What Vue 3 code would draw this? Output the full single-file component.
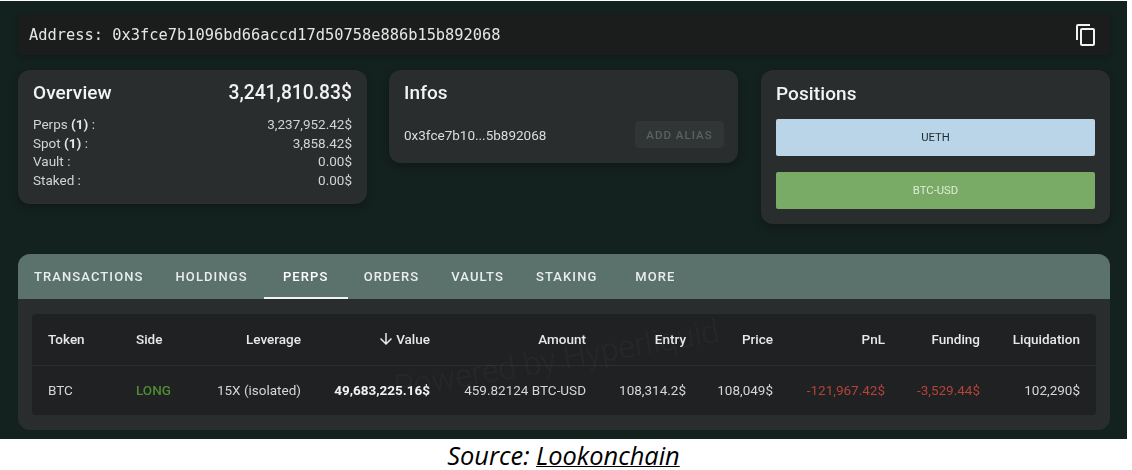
<template>
  <div class="page">
    <div class="screen">
      <div class="address-bar">
        <span class="address-text">Address: {{ address }}</span>
        <svg class="copy-icon" viewBox="0 0 24 24" width="24" height="24" aria-hidden="true">
          <path d="M16 1H4c-1.1 0-2 .9-2 2v14h2V3h12V1zm3 4H8c-1.1 0-2 .9-2 2v14c0 1.100.9 2 2 2h11c1.100 0 2-.9 2-2V7c0-1.100-.9-2-2-2zm0 16H8V7h11v14z" />
        </svg>
      </div>

      <div class="cards">
        <section class="card overview">
          <div class="overview-head">
            <h2>Overview</h2>
            <span class="total">3,241,810.83$</span>
          </div>
          <div v-for="line in overview" :key="line.label" class="overview-line">
            <span>{{ line.label }} <b v-if="line.count">(1)</b> :</span>
            <span>{{ line.value }}</span>
          </div>
        </section>

        <section class="card infos">
          <h2>Infos</h2>
          <div class="infos-row">
            <span>0x3fce7b10...5b892068</span>
            <button class="alias-btn">ADD ALIAS</button>
          </div>
        </section>

        <section class="card positions">
          <h2>Positions</h2>
          <div class="position ueth">UETH</div>
          <div class="position btc">BTC-USD</div>
        </section>
      </div>

      <section class="panel">
        <nav class="tabs">
          <a v-for="tab in tabs" :key="tab" class="tab" :class="{ active: tab === 'PERPS' }">{{ tab }}</a>
        </nav>
        <div class="table-wrap">
          <div class="table">
            <div class="row head">
              <span class="left">Token</span>
              <span class="left">Side</span>
              <span>Leverage</span>
              <span class="value-head">
                <svg viewBox="0 0 24 24" width="18" height="18" aria-hidden="true">
                  <path d="M20 12l-1.410-1.410L13 16.170V4h-2v12.170l-5.580-5.590L4 12l8 8 8-8z" />
                </svg>
                Value
              </span>
              <span>Amount</span>
              <span>Entry</span>
              <span>Price</span>
              <span>PnL</span>
              <span>Funding</span>
              <span>Liquidation</span>
            </div>
            <div class="row body">
              <span class="left">BTC</span>
              <span class="left long">LONG</span>
              <span>15X (isolated)</span>
              <span class="strong">49,683,225.16$</span>
              <span>459.82124 BTC-USD</span>
              <span>108,314.2$</span>
              <span>108,049$</span>
              <span class="neg">-121,967.42$</span>
              <span class="neg">-3,529.44$</span>
              <span>102,290$</span>
            </div>
            <div class="watermark">Powered by Hyperliquid</div>
          </div>
        </div>
      </section>
    </div>
    <p class="source">Source: <span class="source-link">Lookonchain</span></p>
  </div>
</template>

<script setup>
const address = '0x3fce7b1096bd66accd17d50758e886b15b892068'

const overview = [
  { label: 'Perps', count: true, value: '3,237,952.42$' },
  { label: 'Spot', count: true, value: '3,858.42$' },
  { label: 'Vault', count: false, value: '0.00$' },
  { label: 'Staked', count: false, value: '0.00$' },
]

const tabs = ['TRANSACTIONS', 'HOLDINGS', 'PERPS', 'ORDERS', 'VAULTS', 'STAKING', 'MORE']
</script>

<style>
html,
body {
  margin: 0;
  background: #fff;
}
</style>

<style scoped>
.page {
  width: 1132px;
  height: 470px;
  padding-top: 1px;
  box-sizing: border-box;
  font-family: Roboto, "Liberation Sans", sans-serif;
}

.screen {
  width: 1127px;
  height: 438px;
  box-sizing: border-box;
  padding: 13px 17px 0 18px;
  background: #13211f;
  color: #f2f2f2;
  filter: blur(0.35px);
}

.address-bar {
  height: 41px;
  display: flex;
  align-items: center;
  justify-content: space-between;
  padding: 0 11px;
  background: #1b1d1c;
  border-radius: 4px;
  box-shadow: 0 2px 6px rgba(0, 0, 0, 0.2);
}

.address-text {
  font-family: "DejaVu Sans Mono", monospace;
  font-size: 15.36px;
  color: #e6e6e6;
}

.copy-icon {
  fill: #f2f2f2;
  margin-right: 1px;
}

.cards {
  display: flex;
  align-items: flex-start;
  margin-top: 15px;
}

.card {
  background: #2a2d2e;
  border-radius: 12px;
  box-sizing: border-box;
  box-shadow: 0 3px 8px rgba(0, 0, 0, 0.25);
}

.card h2 {
  margin: 0;
  font-size: 19px;
  line-height: 24px;
  font-weight: 500;
  letter-spacing: 0.1px;
  color: #f4f4f4;
}

.overview {
  width: 349px;
  height: 134px;
  padding: 11px 15px 0;
}

.overview-head {
  display: flex;
  justify-content: space-between;
  margin-bottom: 10px;
}

.total {
  font-size: 19.3px;
  line-height: 24px;
  font-weight: 500;
}

.overview-line {
  display: flex;
  justify-content: space-between;
  font-size: 13.5px;
  line-height: 18.7px;
  color: #d2d3d3;
}

.overview-line b {
  font-weight: 700;
  color: #e6e6e6;
}

.infos {
  width: 349px;
  height: 93px;
  margin-left: 22px;
  padding: 11px 14px 0 15px;
}

.infos-row {
  display: flex;
  align-items: center;
  justify-content: space-between;
  margin-top: 16px;
  font-size: 13.5px;
  color: #dcdddd;
}

.alias-btn {
  width: 89px;
  height: 27px;
  padding: 0;
  border: 0;
  border-radius: 4px;
  background: #313536;
  color: #566360;
  font-family: inherit;
  font-size: 11.5px;
  font-weight: 500;
  letter-spacing: 1px;
}

.positions {
  width: 349px;
  height: 154px;
  margin-left: 23px;
  padding: 12px 15px 0;
}

.position {
  height: 37px;
  display: flex;
  align-items: center;
  justify-content: center;
  border-radius: 2px;
  font-size: 11.3px;
}

.ueth {
  margin-top: 13px;
  background: #bad4e8;
  color: #1c2a33;
}

.btc {
  margin-top: 16px;
  background: #7aab66;
  color: #dcebd5;
}

.panel {
  margin-top: 30px;
  height: 176px;
  border-radius: 12px;
  background: #2a2d2e;
  overflow: hidden;
}

.tabs {
  height: 45px;
  display: flex;
  background: #5b716c;
}

.tab {
  min-width: 84px;
  height: 45px;
  box-sizing: border-box;
  line-height: 45px;
  padding: 0 16px;
  text-align: center;
  font-size: 13px;
  font-weight: 500;
  letter-spacing: 1.1px;
  color: #e9eeec;
}

.tab.active {
  border-bottom: 2px solid #f2f2f2;
  color: #fff;
}

.table-wrap {
  padding: 15px 14px 0;
}

.table {
  position: relative;
  background: #1f2122;
  border-radius: 4px;
}

.row {
  display: grid;
  grid-template-columns: 88px 85px 112px 129px 156px 100px 87px 112px 95px 100px;
  align-items: center;
  box-sizing: border-box;
  padding-bottom: 1px;
  font-size: 13.5px;
}

.row > span {
  padding-right: 16px;
  text-align: right;
  white-space: nowrap;
}

.row > span.left {
  padding: 0 0 0 16px;
  text-align: left;
}

.head {
  height: 52px;
  border-bottom: 1px solid #2c2f30;
  font-weight: 500;
  color: #e8e8e8;
}

.row > .value-head {
  display: flex;
  align-items: center;
  justify-content: flex-end;
  gap: 1px;
}

.value-head svg {
  fill: #e8e8e8;
}

.body {
  height: 49px;
  color: #d6d6d6;
}

.long {
  color: #4f8a34;
  font-weight: 500;
}

.strong {
  font-weight: 700;
  color: #f2f2f2;
}

.neg {
  color: #b5433a;
}

.watermark {
  position: absolute;
  left: 360px;
  top: 26px;
  font-size: 32px;
  font-weight: 300;
  white-space: nowrap;
  color: rgba(255, 255, 255, 0.03);
  transform: rotate(-10deg);
  pointer-events: none;
}

.source {
  margin: 0;
  height: 31px;
  width: 1127px;
  text-align: center;
  font-family: "Open Sans", sans-serif;
  font-style: italic;
  font-size: 25.4px;
  line-height: 33px;
  color: #000;
}

.source-link {
  display: inline-block;
  line-height: 29px;
  text-decoration: underline;
  text-decoration-thickness: 1px;
  border-bottom: 1px solid #d8b95a;
}
</style>
